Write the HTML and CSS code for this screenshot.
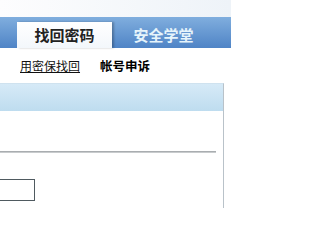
FILE: index.html
```html
<!DOCTYPE html>
<html lang="zh">
<head>
<meta charset="utf-8">
<link rel="stylesheet" href="styles.css">
</head>
<body>
<div class="top"></div>
<div class="tabbar">
  <div class="tab active">找回密码</div>
  <div class="tab">安全学堂</div>
</div>
<div class="subnav">
  <a class="sublink" href="#">用密保找回</a>
  <span class="subcur">帐号申诉</span>
</div>
<div class="panel">
  <div class="panel-head"></div>
  <div class="panel-body">
    <div class="rule"></div>
    <div class="field"></div>
  </div>
</div>
</body>
</html>
```
FILE: styles.css
```css
html, body {
  margin: 0;
  padding: 0;
  background: #fff;
  width: 231px;
  height: 208px;
  overflow: hidden;
  font-family: "Noto Sans CJK SC", "Liberation Sans", sans-serif;
}
.top {
  height: 17px;
  background: linear-gradient(to right, #fdfdfe, #eef3f8);
}
.tabbar {
  height: 31px;
  background: linear-gradient(to bottom, #80aede, #4f84c6);
  display: flex;
  align-items: flex-end;
  padding-left: 17px;
}
.tab {
  height: 26px;
  width: 95px;
  display: flex;
  align-items: center;
  justify-content: center;
  font-size: 15px;
  font-weight: bold;
  color: #e6f4fb;
  padding-bottom: 1px;
  box-sizing: border-box;
}
.tab.active {
  background: linear-gradient(to bottom, #ffffff, #f3f7fb);
  color: #222;
  box-shadow: 2px 0 2px rgba(0,0,0,0.25);
}
.tab + .tab {
  padding-left: 8px;
}
.subnav {
  height: 35px;
  display: flex;
  align-items: center;
  padding-left: 20px;
  gap: 20px;
  font-size: 12px;
}
.sublink {
  color: #111;
  text-decoration: underline;
}
.subcur {
  color: #000;
  font-weight: bold;
  font-size: 12.5px;
}
.panel {
  width: 224px;
  height: 126px;
  border-right: 1px solid #b9c2c9;
  border-top: 1px solid #cfe2ef;
  box-sizing: border-box;
}
.panel-head {
  height: 27px;
  background: linear-gradient(to bottom, #d6eaf7, #bedcef);
}
.panel-body {
  padding-top: 40px;
}
.rule {
  width: 216px;
  height: 1px;
  background: #a9adb0;
  border-bottom: 1px solid #c8cbcd;
}
.field {
  margin-top: 26px;
  width: 34px;
  height: 20px;
  border: 1px solid #4f5a60;
  border-left: none;
}
```
